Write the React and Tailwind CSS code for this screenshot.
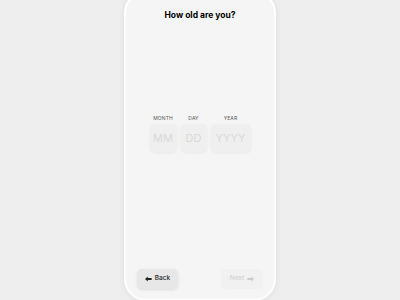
import React from "react";

function ArrowLeft({ className }) {
    return (
        <svg viewBox="0 0 10 8" className={className} fill="currentColor">
            <path d="M0 4 L4 0.5 L4 2.6 L9.5 2.6 L9.5 5.4 L4 5.4 L4 7.5 Z" />
        </svg>
    );
}

function ArrowRight({ className }) {
    return (
        <svg viewBox="0 0 10 8" className={className} fill="currentColor">
            <path d="M10 4 L6 0.5 L6 2.6 L0.5 2.6 L0.5 5.4 L6 5.4 L6 7.5 Z" />
        </svg>
    );
}

function DateField({ label, placeholder, width }) {
    return (
        <div className="flex flex-col items-center gap-[2px]">
            <span className="text-[5px] tracking-wide text-[#555] uppercase">{label}</span>
            <div className={`${width} h-[28px] rounded-[5px] bg-[#efefef] shadow-[0_1px_3px_rgba(0,0,0,0.06)] flex items-center justify-center`}>
                <span className="text-[11px] text-[#d9d9d9]">{placeholder}</span>
            </div>
        </div>
    );
}

export default function App() {
    return (
        <div className="w-[400px] h-[300px] bg-[#eeeeee] flex justify-center overflow-hidden" style={{ fontFamily: "Inter, 'Noto Sans', sans-serif" }}>
            <div className="w-[152px] h-[310px] -mt-[9px] rounded-[22px] border-2 border-white bg-[#f5f5f5] shadow-[0_0_6px_rgba(0,0,0,0.08)] flex flex-col items-center">
                <h1 className="mt-[16px] text-[8.5px] font-bold text-black">How old are you?</h1>

                <div className="mt-[93px] flex items-start gap-[4px]">
                    <DateField label="Month" placeholder="MM" width="w-[27px]" />
                    <DateField label="Day" placeholder="DD" width="w-[26px]" />
                    <DateField label="Year" placeholder="YYYY" width="w-[40px]" />
                </div>

                <div className="mt-auto mb-[10px] w-full px-[11px] flex justify-between">
                    <button className="w-[41px] h-[20px] rounded-[5px] bg-[#e7e7e7] shadow-[0_1px_3px_rgba(0,0,0,0.1)] flex items-center justify-center gap-[3px] text-[6.5px] font-medium text-[#222]">
                        <ArrowLeft className="w-[7px] h-[6px]" />
                        Back
                    </button>
                    <button className="w-[42px] h-[20px] rounded-[5px] bg-[#f1f1f1] flex items-center justify-center gap-[3px] text-[6.5px] text-[#cccccc]">
                        Next
                        <ArrowRight className="w-[7px] h-[6px]" />
                    </button>
                </div>
            </div>
        </div>
    );
}
